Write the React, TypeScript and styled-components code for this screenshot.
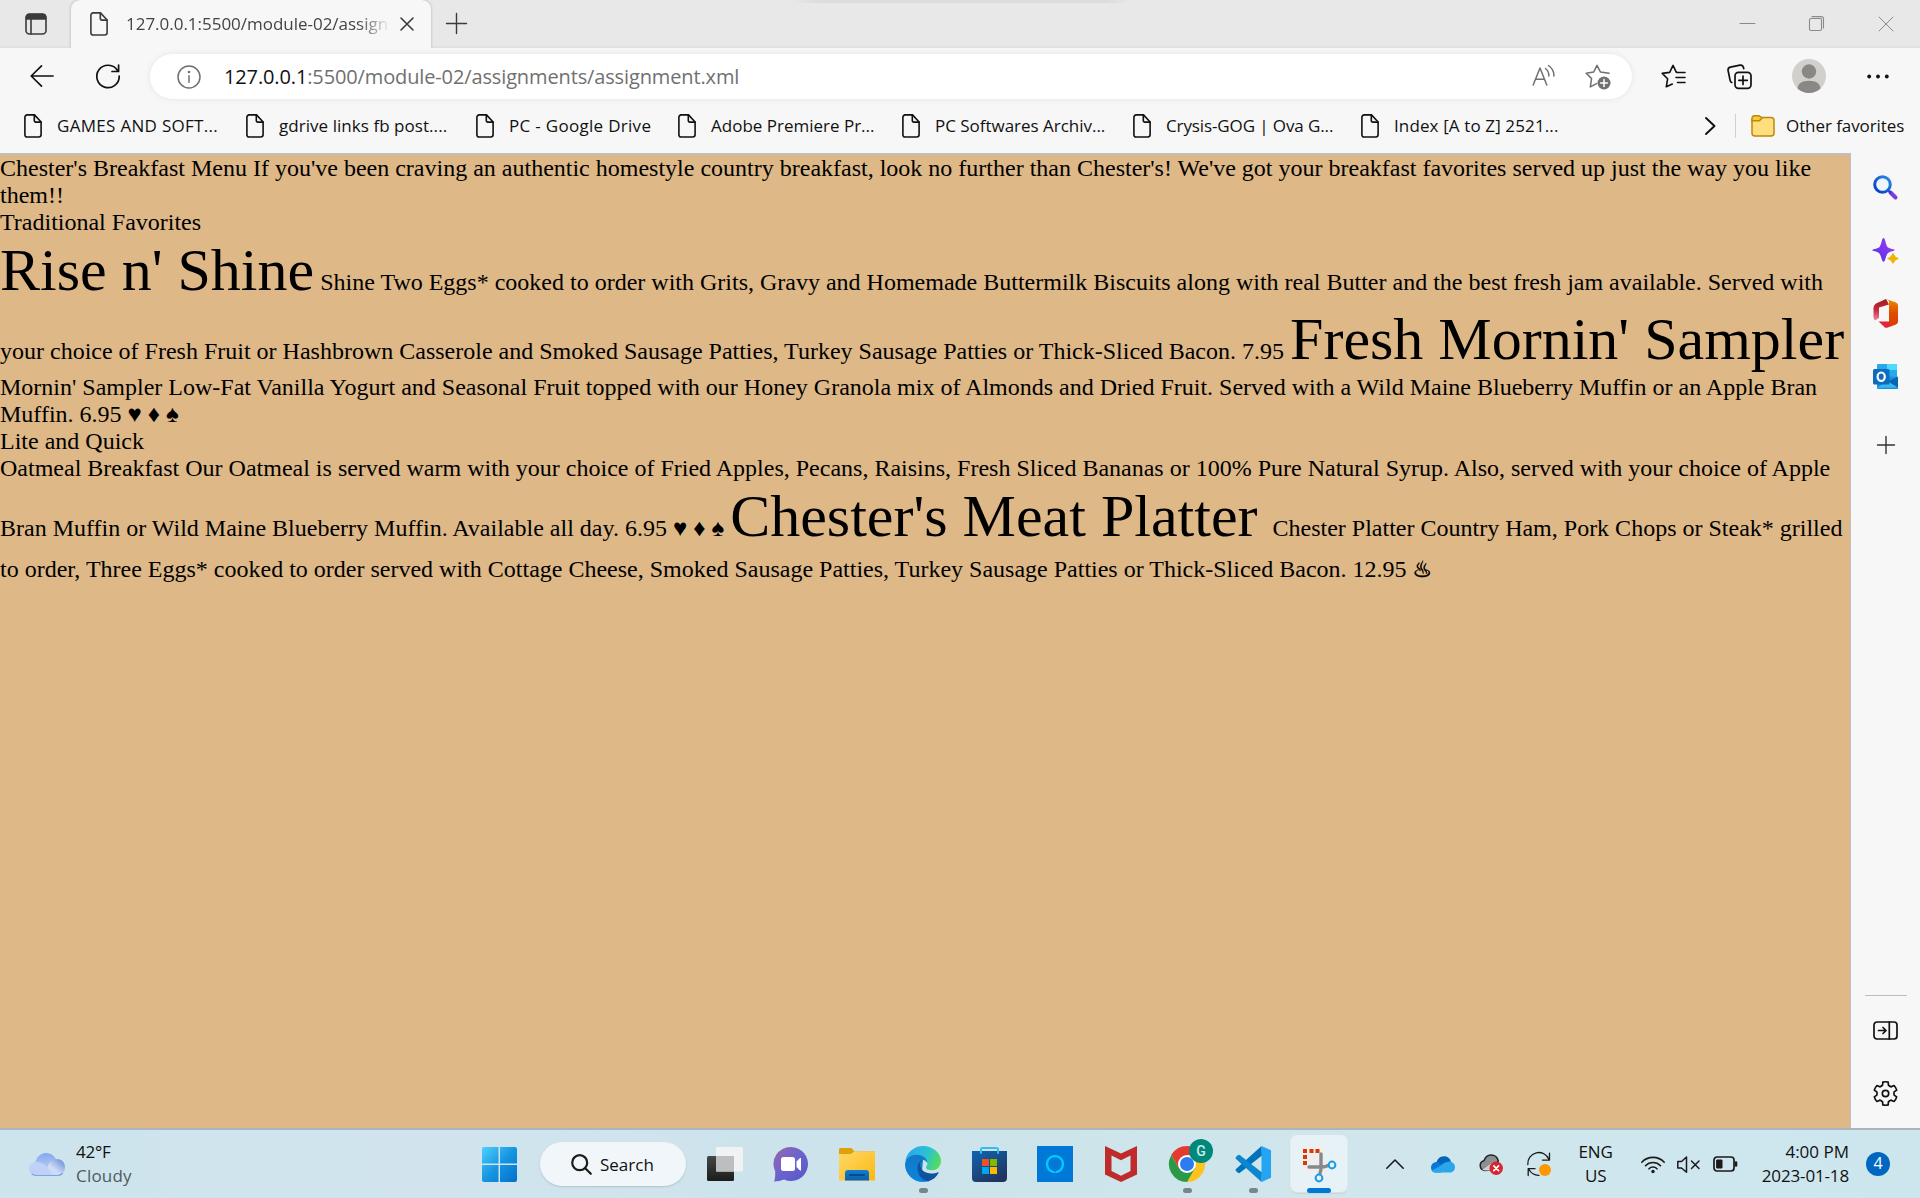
import React from "react";
import styled, { createGlobalStyle, css } from "styled-components";

const ui = `"Open Sans", "Noto Sans", "Liberation Sans", sans-serif`;

const Global = createGlobalStyle`
  * { box-sizing: border-box; }
  body { margin: 0; background: #f7f7f7; }
  svg { display: block; flex: none; overflow: visible; }
`;

const Screen = styled.div`
  display: flex;
  flex-direction: column;
  width: 1920px;
  height: 1198px;
  overflow: hidden;
  font-family: ${ui};
  color: #111;
`;

const Label = styled.span<{ $size?: number; $ls?: number; $color?: string }>`
  font-size: ${(p) => p.$size ?? 17}px;
  letter-spacing: ${(p) => p.$ls ?? 0}px;
  color: ${(p) => p.$color ?? "#111"};
  white-space: nowrap;
`;

/* ---------- tab strip ---------- */
const TabStrip = styled.header`
  display: flex;
  height: 48px;
  background: linear-gradient(#e8e8e8 45px, #dedede 48px);
  align-items: center;
`;
const TabActions = styled.div`
  width: 71px;
  padding-left: 25px;
`;
const Tab = styled.div`
  display: flex;
  align-items: center;
  width: 360px;
  height: 48px;
  padding-left: 19px;
  background: #f7f7f7;
  border-radius: 9px 9px 0 0;
  box-shadow: 0 0 3px rgba(0, 0, 0, 0.25);
  clip-path: inset(0 -4px 0 -4px);
`;
const TabTitle = styled.div`
  width: 262px;
  margin-left: 18px;
  padding-bottom: 1px;
  white-space: nowrap;
  mask-image: linear-gradient(90deg, #000 232px, transparent 264px);
`;
const CloseTab = styled.div`
  margin-left: 12px;
`;
const NewTab = styled.div`
  margin-left: 15px;
  padding-bottom: 1px;
`;
const DragHint = styled.div`
  align-self: flex-start;
  width: 340px;
  height: 3px;
  margin-left: 326px;
  background: linear-gradient(90deg, transparent, #dcdcdc 8%, #dcdcdc 92%, transparent);
`;
const WindowButtons = styled.div`
  display: flex;
  align-items: center;
  gap: 54px;
  margin-left: auto;
  padding: 0 26px 1px 0;
`;

/* ---------- toolbar ---------- */
const Toolbar = styled.div`
  display: flex;
  align-items: center;
  height: 57px;
  padding-left: 30px;
  background: #f7f7f7;
`;
const NavButtons = styled.div`
  display: flex;
  gap: 42px;
  width: 120px;
  padding-bottom: 1px;
`;
const AddressBar = styled.div`
  display: flex;
  align-items: center;
  width: 1482px;
  height: 45px;
  padding: 0 21px 0 27px;
  background: #fff;
  border-radius: 23px;
  box-shadow: 0 0 6px rgba(0, 0, 0, 0.08);
`;
const Url = styled.div`
  flex: 1;
  margin-left: 23px;
  padding-bottom: 1px;
  white-space: nowrap;
`;
const AddressIcons = styled.div`
  display: flex;
  gap: 29px;
`;
const ToolbarIcons = styled.div`
  display: flex;
  align-items: center;
  gap: 40.5px;
  margin-left: 29px;
  padding-bottom: 1px;
`;

/* ---------- bookmarks ---------- */
const Bookmarks = styled.nav`
  display: flex;
  align-items: center;
  height: 48px;
  padding-left: 24px;
  padding-bottom: 6px;
  background: #f7f7f7;
`;
const Bookmark = styled.div<{ $w: number }>`
  display: flex;
  align-items: center;
  gap: 15px;
  width: ${(p) => p.$w}px;
  & > span { padding-bottom: 2px; }
`;
const MoreBookmarks = styled.div`
  display: flex;
  align-items: center;
  height: 24px;
  margin-left: auto;
  padding-right: 19px;
  border-right: 1px solid #d0d0d0;
`;
const OtherFavorites = styled.div`
  display: flex;
  align-items: center;
  gap: 11px;
  width: 184px;
  padding-left: 15px;
  & > span { padding-bottom: 2px; }
`;

/* ---------- page ---------- */
const Body = styled.div`
  display: flex;
  height: 975px;
`;
const Page = styled.main`
  width: 1851px;
  border-top: 2px solid #bfbfbf;
  border-right: 1px solid #bfbfbf;
  background: #deb887;
  color: #000;
  font-family: "Liberation Serif", "Times New Roman", serif;
  font-size: 24px;
  line-height: 27px;
`;
const Section = styled.div``;
const ItemName = styled.span`
  font-size: 60px;
  line-height: 69px;
`;
const Steam = styled.span`
  display: inline-block;
  font-family: "DejaVu Sans", sans-serif;
  font-size: 22px;
  line-height: 38px;
  -webkit-text-stroke: 0.7px #000;
`;

/* ---------- sidebar ---------- */
const Sidebar = styled.aside`
  display: flex;
  flex-direction: column;
  align-items: center;
  width: 69px;
  padding: 19px 0 3px;
  background: #f7f7f7;
`;
const SideSlot = styled.div<{ $h?: number }>`
  display: flex;
  align-items: center;
  justify-content: center;
  height: ${(p) => p.$h ?? 63}px;
`;
const SideRule = styled.div`
  width: 42px;
  height: 1px;
  margin-top: auto;
  margin-bottom: 3px;
  background: #bdbdbd;
`;

/* ---------- taskbar ---------- */
const Taskbar = styled.footer`
  display: flex;
  align-items: center;
  height: 70px;
  border-top: 2px solid #a9b6bd;
  background: linear-gradient(90deg, #cde4ec, #d1e4ed 22%, #cce3eb 45%, #d0e6ec 70%, #cde6ee);
`;
const Weather = styled.div`
  display: flex;
  align-items: center;
  gap: 11px;
  width: 466px;
  padding-left: 29px;
`;
const Stack = styled.div<{ $align?: string }>`
  display: flex;
  flex-direction: column;
  align-items: ${(p) => p.$align ?? "flex-start"};
  line-height: 24px;
  padding-bottom: 1px;
`;
const Slot = styled.div<{ $running?: boolean }>`
  position: relative;
  display: flex;
  align-items: center;
  justify-content: center;
  width: 66px;
  height: 68px;
  ${(p) =>
    p.$running &&
    css`
      &::after {
        content: "";
        position: absolute;
        left: 28.5px;
        top: 58px;
        width: 9px;
        height: 5px;
        border-radius: 3px;
        background: #76868b;
      }
    `}
`;
const ActiveTile = styled.div`
  position: relative;
  display: flex;
  align-items: center;
  justify-content: center;
  width: 56px;
  height: 56px;
  border-radius: 6px;
  background: #e7f2f7;
  box-shadow: 0 0 0 1px rgba(255, 255, 255, 0.5), 0 1px 2px rgba(0, 0, 0, 0.2);
  &::after {
    content: "";
    position: absolute;
    left: 16px;
    bottom: -1px;
    width: 24px;
    height: 5px;
    border-radius: 3px;
    background: #0078d4;
  }
`;
const SearchPill = styled.div`
  display: flex;
  align-items: center;
  width: 146px;
  height: 44px;
  margin: 0 6px 0 8px;
  padding-left: 31px;
  gap: 8px;
  border-radius: 22px;
  background: #f0f6f9;
  box-shadow: 0 1px 2px rgba(0, 0, 0, 0.15);
`;
const AccountBadge = styled.div`
  position: absolute;
  left: 35px;
  top: 9px;
  width: 24px;
  height: 24px;
  border-radius: 50%;
  background: #00897b;
  color: #cfeae6;
  font: 500 14px/24px Roboto, sans-serif;
  text-align: center;
`;
const Tray = styled.div`
  display: flex;
  align-items: center;
  margin-left: 34px;
`;
const TrayItem = styled.div<{ $w: number }>`
  display: flex;
  align-items: center;
  width: ${(p) => p.$w}px;
`;
const Clock = styled.div`
  width: 112px;
`;
const Count = styled.div`
  width: 24px;
  height: 24px;
  margin-left: 17px;
  border-radius: 50%;
  background: #0067c0;
  color: #fff;
  font-size: 16px;
  line-height: 23px;
  text-align: center;
`;

/* ---------- icons ---------- */
type IconProps = { w: number; h: number; s?: string; sw?: number; children: React.ReactNode };
const Icon = ({ w, h, s = "none", sw = 1.6, children }: IconProps) => (
  <svg width={w} height={h} viewBox={`0 0 ${w} ${h}`} fill="none" stroke={s} strokeWidth={sw} strokeLinecap="round" strokeLinejoin="round">
    {children}
  </svg>
);

const PageIcon = ({ color = "#111" }: { color?: string }) => (
  <Icon w={18} h={24} s={color} sw={1.6}>
    <path d="M3.2.9h7.3L17.1 8v12.6a2.4 2.4 0 0 1-2.4 2.4H3.2A2.3 2.3 0 0 1 .9 20.7V3.2A2.3 2.3 0 0 1 3.2.9z" />
    <path d="M10.300 1v5.600a1.500 1.500 0 0 0 1.500 1.500H17" />
  </Icon>
);
const TabActionsIcon = () => (
  <Icon w={22} h={22} s="#3b3b3b" sw={1.6}>
    <rect x="1" y="1" width="20" height="20" rx="3.500" />
    <path d="M1.500 6V4A2.500 2.500 0 0 1 4 1.500h14A2.500 2.500 0 0 1 20.500 4v2z" fill="#3b3b3b" />
    <path d="M6 6v15" />
  </Icon>
);
const Cross = ({ size, color, sw }: { size: number; color: string; sw: number }) => (
  <Icon w={size} h={size} s={color} sw={sw}>
    <path d={`M1 1L${size - 1} ${size - 1}M${size - 1} 1L1 ${size - 1}`} />
  </Icon>
);
const Plus = ({ size, color = "#3b3b3b" }: { size: number; color?: string }) => (
  <Icon w={size} h={size} s={color} sw={1.4}>
    <path d={`M${size / 2} .5V${size - 0.5}M.5 ${size / 2}H${size - 0.5}`} />
  </Icon>
);
const BackIcon = () => (
  <Icon w={24} h={24} s="#111" sw={1.7}>
    <path d="M23 12H1.500M11.500 1.800L1.200 12l10.300 10.200" />
  </Icon>
);
const RefreshIcon = () => (
  <Icon w={24} h={24} s="#111" sw={1.7}>
    <path d="M21.500 6.500A11.200 11.200 0 1 0 23.200 12M22.600 1v6.500H16" />
  </Icon>
);
const InfoIcon = () => (
  <Icon w={24} h={24} s="#707070" sw={1.5}>
    <circle cx="12" cy="12" r="11" />
    <path d="M12 10.800v6.500" />
    <circle cx="12" cy="7" r=".6" fill="#707070" />
  </Icon>
);
const ReadAloudIcon = () => (
  <Icon w={24} h={24} s="#707070" sw={1.5}>
    <path d="M1.200 21L8 4l6.800 17M3.700 15.200h8.600M13.500 4.500q3.700 3 3.300 7.500M16.500 1.500q5.700 4 5.400 10.500" />
  </Icon>
);
const StarPlusIcon = () => (
  <Icon w={26} h={26} s="#707070" sw={1.5}>
    <path d="M24 9.300l-8.500-1.200L12 1.300 8.600 8.100 1.200 9.300l5.400 5.300-1.300 8.300 6.300-3.300" />
    <circle cx="19" cy="19" r="6.500" fill="#707070" stroke="none" />
    <path d="M19 15.600v6.800M15.600 19h6.800" stroke="#fff" />
  </Icon>
);
const FavoritesIcon = () => (
  <Icon w={25} h={24} s="#111" sw={1.6}>
    <path d="M16 8.400h-.6L12 1.400 8.700 8.400 1.200 9.400l5.400 5.400-1.300 8L11.300 20M16.500 8.500h7.500M15 13.500h9M16.500 18.500h7.500" />
  </Icon>
);
const CollectionsIcon = () => (
  <Icon w={25} h={25} s="#111" sw={1.700}>
    <rect x="8" y="8.300" width="16" height="16" rx="3.500" />
    <path d="M16 12v8.500M11.800 16.300h8.500M4.800 18.500a3 3 0 0 1-1.700-2.200L1.100 6.500a3 3 0 0 1 2.300-3.400L13 1.100a3 3 0 0 1 3.400 2.200l.3 1.300" />
  </Icon>
);
const AvatarIcon = () => (
  <Icon w={34} h={34}>
    <circle cx="17" cy="17" r="17" fill="#d2d0cd" />
    <circle cx="17" cy="12.500" r="7.200" fill="#8b8785" />
    <path d="M5.500 29.500C6 24.500 10 21.800 17 21.800s11 2.700 11.500 7.700A17 17 0 0 1 5.500 29.500z" fill="#8b8785" />
  </Icon>
);
const DotsIcon = () => (
  <Icon w={22} h={5}>
    {[2.2, 11, 19.8].map((x) => (
      <circle key={x} cx={x} cy="2.500" r="1.900" fill="#111" />
    ))}
  </Icon>
);
const FolderIcon = () => (
  <Icon w={24} h={22} s="#b98b0a" sw={1.5}>
    <path d="M1 4.500V18a3 3 0 0 0 3 3h16a3 3 0 0 0 3-3V5.500a3 3 0 0 0-3-3h-9z" fill="#ffdf7d" />
    <path d="M1 5V3a2.200 2.200 0 0 1 2.200-2.200h5L11 3 8.500 5.800H1z" fill="#fcc934" />
  </Icon>
);

/* sidebar icons */
const SideSearch = () => (
  <Icon w={25} h={25}>
    <defs>
      <linearGradient id="ss" x1="0" y1="1" x2="1" y2="0">
        <stop offset="0" stopColor="#0a35c4" />
        <stop offset="1" stopColor="#2b8fe0" />
      </linearGradient>
    </defs>
    <path d="M17.500 17.500l5 5" stroke="#7b3fe0" strokeWidth="4" />
    <path d="M14.500 14.500l3 3" stroke="#2a44c8" strokeWidth="2.400" />
    <circle cx="9.500" cy="9.500" r="7.800" stroke="url(#ss)" strokeWidth="3" fill="#eef6fc" />
  </Icon>
);
const SideSparkle = () => (
  <Icon w={27} h={26}>
    <defs>
      <linearGradient id="sp" x1="0" y1="1" x2="1" y2="0">
        <stop offset="0" stopColor="#4a2fe8" />
        <stop offset="1" stopColor="#a93df5" />
      </linearGradient>
    </defs>
    <path d="M11.500 0q1 0 1.500 2 1.500 6.500 3 7.500t6 2q1.500.5 0 1.200-4.500 1-6 2.300t-3 7q-.5 1.800-1.500 1.800t-1.500-1.800q-1.500-5.700-3-7t-6-2.300q-1.500-.7 0-1.200 4.500-1 6-2t3-7.500q.5-2 1.500-2z" fill="url(#sp)" />
    <path d="M21 15.500q1.300 4 5 5-3.700 1-5 4.500-1.300-3.500-5-4.500 3.700-1 5-5z" fill="#f0b400" stroke="#f0b400" strokeWidth="1.200" />
  </Icon>
);
const SideOffice = () => (
  <Icon w={25} h={29}>
    <defs>
      <linearGradient id="of" x1="0" y1="0" x2="0" y2="1">
        <stop offset="0" stopColor="#f08a00" />
        <stop offset=".5" stopColor="#e04a00" />
        <stop offset="1" stopColor="#d83b01" />
      </linearGradient>
      <linearGradient id="ol" x1="0" y1="0" x2="0" y2="1">
        <stop offset="0" stopColor="#a01a1a" />
        <stop offset=".5" stopColor="#c62a3c" />
        <stop offset="1" stopColor="#e88bab" />
      </linearGradient>
    </defs>
    <path d="M13 0L3 4.500Q.5 6 .5 9v9q0 2.500 1.500 3.500l4-2.500V8.500L16 5.500z" fill="url(#ol)" />
    <path d="M13 0l10 3.500q2 1 2 3v16q0 2-2 3L13.500 29l2.500-3V2z" fill="url(#of)" />
    <path d="M5.500 22.500h11V26q-1.500 3-4 3z" fill="#e4233d" />
  </Icon>
);
const SideOutlook = () => (
  <Icon w={25} h={25}>
    <path d="M5 0h18q1 0 1 1v13H4V1q0-1 1-1z" fill="#28a8ea" />
    <path d="M14 0h9q1 0 1 1v5H14z" fill="#50d9ff" />
    <path d="M4 12l21 1v11q0 1-1 1H5q-1 0-1-1z" fill="#1490df" />
    <path d="M25 12.500v12L14 18z" fill="#0a64b0" />
    <path d="M4 24l21-.5L14 17z" fill="#35b8f1" />
    <rect y="5" width="16.500" height="15.500" rx="1.500" fill="#0f6cbd" />
    <ellipse cx="8.200" cy="12.700" rx="3.600" ry="4.200" stroke="#fff" strokeWidth="2.200" />
  </Icon>
);
const SidePanel = () => (
  <Icon w={25} h={19} s="#111" sw={1.700}>
    <rect x="1" y="1" width="23" height="17" rx="3" />
    <path d="M16.300 1v17M5.500 9.500h7.500M10 6.500l3 3-3 3" />
  </Icon>
);
const gearPath = (() => {
  const pts: string[] = [];
  for (let i = 0; i < 6; i++) {
    const a = (i * Math.PI) / 3 - Math.PI / 2;
    const at = (r: number, d: number) =>
      `${(12.5 + r * Math.cos(a + d)).toFixed(2)} ${(12.5 + r * Math.sin(a + d)).toFixed(2)}`;
    pts.push(`${i ? "L" : "M"}${at(8.8, -0.34)}L${at(11.7, -0.23)}Q${at(12.1, 0)} ${at(11.7, 0.23)}L${at(8.8, 0.34)}Q${at(8.2, 0.52)} ${at(8.8, 0.71)}`);
  }
  return pts.join("") + "Z";
})();
const GearIcon = () => (
  <Icon w={25} h={25} s="#111" sw={1.7}>
    <path d={gearPath} />
    <circle cx="12.500" cy="12.500" r="3.200" />
  </Icon>
);

/* taskbar icons */
const CloudIcon = () => (
  <Icon w={36} h={23}>
    <defs>
      <linearGradient id="cl" x1="0" y1="0" x2="0" y2="1">
        <stop offset="0" stopColor="#84a7ee" />
        <stop offset="1" stopColor="#c3d5f6" />
      </linearGradient>
      <linearGradient id="cr" x1="1" y1="0" x2="0" y2="1">
        <stop offset="0" stopColor="#5f86d6" />
        <stop offset=".6" stopColor="#cfdcf6" />
      </linearGradient>
    </defs>
    <path d="M6 13C6 5 11 0 17 0c6 0 10 4 10.500 9L22 20H8z" fill="url(#cl)" />
    <path d="M17 22.500c0-3 0-6 3-12C22 7 25 6 28 6c5 0 8 4 8 8.300 0 4.700-3.500 8.200-8 8.200z" fill="url(#cr)" />
    <path d="M8 22.500c-5 0-8-3-8-6.800C0 12 3 9 7.500 9c4 0 6.500 1.500 9.500 4l8 9.500z" fill="#bfd2f5" />
    <path d="M3 21q2 1.500 5 1.500h20q3.500 0 5.500-2" stroke="#7fa2ea" strokeWidth="1.200" />
  </Icon>
);
const StartIcon = () => (
  <Icon w={35} h={35}>
    <defs>
      <linearGradient id="st" gradientUnits="userSpaceOnUse" x1="0" y1="0" x2="35" y2="35">
        <stop offset="0" stopColor="#4dd0ff" />
        <stop offset=".5" stopColor="#1796e0" />
        <stop offset="1" stopColor="#0070cc" />
      </linearGradient>
    </defs>
    <path d="M2 0h14.500v16.500H0V2Q0 0 2 0zM18 0h15q2 0 2 2v14.500H18zM0 18h16.500v17H2q-2 0-2-2zM18 18h17v15q0 2-2 2H18z" fill="url(#st)" />
  </Icon>
);
const SearchIcon = () => (
  <Icon w={21} h={21} s="#1b1b1b" sw={2.200}>
    <circle cx="8.700" cy="8.700" r="7.500" />
    <path d="M14.200 14.200l5.600 5.600" />
  </Icon>
);
const TaskViewIcon = () => (
  <Icon w={36} h={34}>
    <defs>
      <linearGradient id="tv" x1="0" y1="0" x2="0" y2="1">
        <stop offset="0" stopColor="#464646" />
        <stop offset="1" stopColor="#1c1c1c" />
      </linearGradient>
    </defs>
    <rect y="9" width="27" height="25" rx="1.500" fill="url(#tv)" />
    <rect x="9" width="27" height="24.500" rx="1.500" fill="#f0f2f3" />
    <path d="M9 9h18v15.500H9z" fill="#bdbebf" />
  </Icon>
);
const ChatIcon = () => (
  <Icon w={35} h={35}>
    <defs>
      <linearGradient id="ch" x1="0" y1="0" x2="1" y2="1">
        <stop offset="0" stopColor="#9b66a8" />
        <stop offset=".5" stopColor="#6a63cd" />
        <stop offset="1" stopColor="#5558c8" />
      </linearGradient>
    </defs>
    <path d="M17 0a17 17 0 1 1-7 32.500Q5.500 34.500 0 34.500 1.500 31 1.200 24.500A17 17 0 0 1 17 0z" fill="url(#ch)" />
    <rect x="7" y="10" width="14" height="14" rx="2.500" fill="#fff" />
    <path d="M22.500 14.500L26 11h1v12.500h-1L22.500 20z" fill="#fff" />
  </Icon>
);
const ExplorerIcon = () => (
  <Icon w={36} h={33}>
    <defs>
      <linearGradient id="ex" x1="0" y1="0" x2="1" y2="1">
        <stop offset="0" stopColor="#ffd968" />
        <stop offset="1" stopColor="#fcb813" />
      </linearGradient>
      <linearGradient id="eb" x1="0" y1="0" x2="0" y2="1">
        <stop offset="0" stopColor="#0a7fd8" />
        <stop offset="1" stopColor="#0f5fa8" />
      </linearGradient>
    </defs>
    <path d="M0 1.500Q0 0 1.500 0H12q1 0 3.500 3.500H36V12H0z" fill="#dfa00a" />
    <path d="M0 6h11q1.500 0 4-2.500h21V32q0 .5-.5.5H1Q0 32.500 0 31.500z" fill="url(#ex)" />
    <path d="M6 32.500V25q0-3 3-3h18q3 0 3 3v7.500z" fill="url(#eb)" />
    <path d="M11 27h14" stroke="#0b4a86" strokeWidth="1.800" />
  </Icon>
);
const EdgeIcon = () => (
  <Icon w={36} h={36}>
    <defs>
      <linearGradient id="e1" gradientUnits="userSpaceOnUse" x1="2" y1="4" x2="36" y2="18">
        <stop offset="0" stopColor="#2ba6f0" />
        <stop offset=".55" stopColor="#2bc3d2" />
        <stop offset="1" stopColor="#5be04a" />
      </linearGradient>
      <linearGradient id="e2" x1="0" y1="0" x2="0" y2="1">
        <stop offset="0" stopColor="#1578c4" />
        <stop offset="1" stopColor="#0a84e0" />
      </linearGradient>
    </defs>
    <path d="M.3 15A18 18 0 0 1 18 0c10 0 18 7 18 15 0 6-4.500 9.300-9.500 9.300-3.500 0-5.500-1.300-5.500-2.800 0-1 1.500-2 1.500-4.500L12 9z" fill="url(#e1)" />
    <path d="M0 18C1 12 6 8.800 11.500 8.800c6 0 10.500 3 11 8.200-1-2-2.500-3.200-4.500-3.200l-1 12 6.500 9.300Q20.500 36 18 36A18 18 0 0 1 0 18z" fill="url(#e2)" />
    <path d="M18 13.800c-3 1-5.500 4-5.500 8 0 7 4.500 12.700 10.500 13.700 5-1.500 8.500-4.500 10.500-8.500q.3-1.200-.8-.8c-2 1-4 1.400-6.200 1.400-6.500 0-11.500-4-11.500-9 0-2 1-3.800 3-4.800z" fill="#0f539f" />
  </Icon>
);
const StoreIcon = () => (
  <Icon w={35} h={35}>
    <defs>
      <linearGradient id="sr" x1="0" y1="0" x2=".6" y2="1">
        <stop offset="0" stopColor="#0f66b2" />
        <stop offset="1" stopColor="#21355f" />
      </linearGradient>
    </defs>
    <path d="M0 4h35v27q0 4-4 4H4q-4 0-4-4z" fill="url(#sr)" />
    <path d="M9 6V2.500Q9 1 10.500 1h14Q26 1 26 2.500V6" stroke="#32bdf2" strokeWidth="2" />
    <path d="M10 12h7v7h-7z" fill="#f25022" />
    <path d="M18 12h7v7h-7z" fill="#7fba00" />
    <path d="M10 20h7v7h-7z" fill="#00a4ef" />
    <path d="M18 20h7v7h-7z" fill="#ffb900" />
  </Icon>
);
const AlexaIcon = () => (
  <Icon w={36} h={36}>
    <path d="M0 0h36v36H0z" fill="#0078d7" />
    <path d="M16.500 26A8 8 0 1 1 19.500 26" stroke="#00caff" strokeWidth="2.200" />
    <path d="M16.800 26.500h2.400" stroke="#00caff" strokeWidth="1" />
  </Icon>
);
const McAfeeIcon = () => (
  <Icon w={32} h={36}>
    <path d="M0 0l16 7.500L32 0v28.500L16 36 0 28.500z" fill="#bf2b2b" />
    <path d="M6.500 9.500l9.500 4.700 9.500-4.700V25L16 29.800 6.500 25z" fill="#cfe5ec" />
  </Icon>
);
const ChromeIcon = () => (
  <Icon w={36} h={36}>
    <path d="M18 18L2.400 9A18 18 0 0 1 33.600 9z" fill="#e33b2e" />
    <path d="M18 18V9h15.600A18 18 0 0 1 18 36z" fill="#fcc31e" />
    <path d="M18 18l7.800 4.500L18 36A18 18 0 0 1 2.400 9l7.800 13.500z" fill="#2a9a48" />
    <path d="M10.200 22.500L2.400 9Q4 6 6.500 4.200L18 9z" fill="#e33b2e" />
    <circle cx="18" cy="18" r="9" fill="#fff" />
    <circle cx="18" cy="18" r="7" fill="#2d7bf0" />
  </Icon>
);
const CodeIcon = () => (
  <Icon w={36} h={36}>
    <path d="M26.500 0L1 23q-1 1 0 2l2 1.800q1 .7 2 0L27 9.500z" fill="#0073bd" />
    <path d="M26.500 36L1 13q-1-1 0-2l2-1.800q1-.7 2 0L27 26.500z" fill="#0c86cf" />
    <path d="M26.500 0L36 4.200v27.600L26.500 36z" fill="#25a4f2" />
  </Icon>
);
const SnipIcon = () => (
  <Icon w={36} h={36}>
    <rect x="0" y="0" width="24" height="27" rx="2" fill="#efeeee" />
    <path d="M2 3h4v4H2zM8.500 3h4v4h-4zM14.500 3h4v4h-4zM2 9h4v4H2zM2 15h4v4H2z" fill="#d63b04" />
    <path d="M20 8v14q0 3-1 5M8 21h13q3 0 6-1.500" stroke="#85898c" strokeWidth="3.400" />
    <circle cx="31" cy="19" r="3.400" stroke="#1a9be6" strokeWidth="2" />
    <circle cx="18" cy="32" r="3.400" stroke="#1a9be6" strokeWidth="2" />
  </Icon>
);
const ChevronUp = () => (
  <Icon w={18} h={10} s="#1b1b1b" sw={1.6}>
    <path d="M.8 9.200L9 1l8.200 8.200" />
  </Icon>
);
const OneDriveIcon = () => (
  <Icon w={24} h={17}>
    <path d="M5 8C6 3 9 .3 13 .3c3.500 0 6 2 7 5.200L12 11z" fill="#0364b8" />
    <path d="M5 16.500C2 16.500 0 14.500 0 11.500 0 8 3 5.500 6.500 6L18 12l-8 4.500z" fill="#0a78d4" />
    <path d="M10 9.500Q13 6 18 5.500c3.500 0 6 2.500 6 5.500s-2 5.500-5 5.500H4q-2 0-3.300-2z" fill="#28a8ea" />
  </Icon>
);
const OfflineCloudIcon = () => (
  <Icon w={24} h={21}>
    <path d="M5.500 16.500A5 5 0 0 1 5 6.700C6.300 3 9 1 12 1c4 0 6.500 2.500 7.300 6L13 16z" fill="#8d9093" stroke="#222" strokeWidth="1.500" />
    <path d="M3 16l10-7 6-1-5 8.500H6z" fill="#cdd0d2" />
    <circle cx="17.200" cy="14.300" r="6.700" fill="#d9252f" />
    <path d="M14.800 11.900l4.800 4.800M19.600 11.900l-4.800 4.800" stroke="#fff" strokeWidth="1.700" />
  </Icon>
);
const SyncIcon = () => (
  <Icon w={24} h={24} s="#1b1b1b" sw={1.300}>
    <path d="M.8 12.500A11 11 0 0 1 22 7.500M22.500 1.200v6.900H15.500M12 23.300A11 11 0 0 1 2 17.500M1.200 23.500v-6.800H8" />
    <circle cx="18" cy="18" r="6" fill="#ff9800" stroke="none" />
  </Icon>
);
const WifiIcon = () => (
  <Icon w={24} h={17} s="#1b1b1b" sw={1.600}>
    <path d="M.8 6.200a15.500 15.500 0 0 1 22.400 0M4.500 9.700a10.500 10.500 0 0 1 15 0M8 12.800a5.500 5.500 0 0 1 8 0" />
    <circle cx="12" cy="15.500" r="1.700" fill="#1b1b1b" stroke="none" />
  </Icon>
);
const MuteIcon = () => (
  <Icon w={23} h={17} s="#1b1b1b" sw={1.500}>
    <path d="M.8 5.500h3.700L9.500 1v15.200L4.500 12H.8zM14.500 5l7.500 7.500M22 5l-7.500 7.500" />
  </Icon>
);
const BatteryIcon = () => (
  <Icon w={25} h={16} s="#1b1b1b" sw={1.700}>
    <rect x="1" y="1" width="20" height="14" rx="3" />
    <path d="M4 4h5v8H4z" fill="#1b1b1b" strokeWidth="1" />
    <path d="M23 6.500v3" strokeWidth="2.600" />
  </Icon>
);

/* name, slot width, letter spacing */
const bookmarks: [string, number, number][] = [
  ["GAMES AND SOFT...", 222, 0.3],
  ["gdrive links fb post....", 230, 0.05],
  ["PC - Google Drive", 202, 0.3],
  ["Adobe Premiere Pr...", 224, 0],
  ["PC Softwares Archiv...", 231, -0.02],
  ["Crysis-GOG | Ova G...", 228, -0.11],
  ["Index [A to Z] 2521...", 220, 0.12],
];

export default function App() {
  return (
    <Screen>
      <Global />
      <TabStrip>
        <TabActions><TabActionsIcon /></TabActions>
        <Tab>
          <PageIcon color="#3b3b3b" />
          <TabTitle><Label $color="#444" $ls={-0.02}>127.0.0.1:5500/module-02/assign</Label></TabTitle>
          <CloseTab><Cross size={14} color="#3b3b3b" sw={1.6} /></CloseTab>
        </Tab>
        <NewTab><Plus size={21} /></NewTab>
        <DragHint />
        <WindowButtons>
          <Icon w={15} h={15} s="#8a8a8a" sw={1}><path d="M0 7.500h15" /></Icon>
          <Icon w={15} h={15} s="#8a8a8a" sw={1.100}>
            <rect x=".5" y="2.500" width="12" height="12" rx="1.500" />
            <path d="M3 .6h9a2.500 2.500 0 0 1 2.500 2.500v9" />
          </Icon>
          <Cross size={16} color="#8a8a8a" sw={1} />
        </WindowButtons>
      </TabStrip>
      <Toolbar>
        <NavButtons><BackIcon /><RefreshIcon /></NavButtons>
        <AddressBar>
          <InfoIcon />
          <Url>
            <Label $size={20} $ls={-0.13}>127.0.0.1</Label>
            <Label $size={20} $ls={-0.13} $color="#707070">:5500/module-02/assignments/assignment.xml</Label>
          </Url>
          <AddressIcons><ReadAloudIcon /><StarPlusIcon /></AddressIcons>
        </AddressBar>
        <ToolbarIcons>
          <FavoritesIcon /><CollectionsIcon /><AvatarIcon /><DotsIcon />
        </ToolbarIcons>
      </Toolbar>
      <Bookmarks>
        {bookmarks.map(([name, w, ls]) => (
          <Bookmark key={name} $w={w}><PageIcon /><Label $ls={ls}>{name}</Label></Bookmark>
        ))}
        <MoreBookmarks>
          <Icon w={12} h={18} s="#111" sw={1.900}><path d="M2 1l8.500 8L2 17" /></Icon>
        </MoreBookmarks>
        <OtherFavorites><FolderIcon /><Label $ls={-0.08}>Other favorites</Label></OtherFavorites>
      </Bookmarks>
      <Body>
        <Page>
          <Section>
            Chester's Breakfast Menu If you've been craving an authentic homestyle country breakfast, look no further than
            Chester's! We've got your breakfast favorites served up just the way you like them!!
          </Section>
          <Section>Traditional Favorites</Section>
          <Section>
            <ItemName>Rise n' Shine</ItemName> Shine Two Eggs* cooked to order with Grits, Gravy and Homemade Buttermilk
            Biscuits along with real Butter and the best fresh jam available. Served with your choice of Fresh Fruit or
            Hashbrown Casserole and Smoked Sausage Patties, Turkey Sausage Patties or Thick-Sliced Bacon. 7.95{" "}
            <ItemName>Fresh Mornin' Sampler </ItemName>Mornin' Sampler Low-Fat Vanilla Yogurt and Seasonal Fruit topped
            with our Honey Granola mix of Almonds and Dried Fruit. Served with a Wild Maine Blueberry Muffin or an Apple
            Bran Muffin. 6.95 ♥ ♦ ♠
          </Section>
          <Section>Lite and Quick</Section>
          <Section>
            Oatmeal Breakfast Our Oatmeal is served warm with your choice of Fried Apples, Pecans, Raisins, Fresh Sliced
            Bananas or 100% Pure Natural Syrup. Also, served with your choice of Apple Bran Muffin or Wild Maine Blueberry
            Muffin. Available all day. 6.95 ♥ ♦ ♠{" "}
            <ItemName>Chester's Meat Platter </ItemName>Chester Platter Country Ham, Pork Chops or Steak* grilled to order,
            Three Eggs* cooked to order served with Cottage Cheese, Smoked Sausage Patties, Turkey Sausage Patties or
            Thick-Sliced Bacon. 12.95 <Steam>♨</Steam>
          </Section>
        </Page>
        <Sidebar>
          <SideSlot $h={30}><SideSearch /></SideSlot>
          <SideSlot $h={97}><SideSparkle /></SideSlot>
          <SideSlot $h={29}><SideOffice /></SideSlot>
          <SideSlot $h={97}><SideOutlook /></SideSlot>
          <SideSlot $h={39}><Plus size={18} color="#333" /></SideSlot>
          <SideRule />
          <SideSlot><SidePanel /></SideSlot>
          <SideSlot><GearIcon /></SideSlot>
        </Sidebar>
      </Body>
      <Taskbar>
        <Weather>
          <CloudIcon />
          <Stack><Label $ls={-0.2}>42°F</Label><Label $ls={0.2} $color="#4d5b60">Cloudy</Label></Stack>
        </Weather>
        <Slot><StartIcon /></Slot>
        <SearchPill><SearchIcon /><Label>Search</Label></SearchPill>
        <Slot><TaskViewIcon /></Slot>
        <Slot><ChatIcon /></Slot>
        <Slot><ExplorerIcon /></Slot>
        <Slot $running><EdgeIcon /></Slot>
        <Slot><StoreIcon /></Slot>
        <Slot><AlexaIcon /></Slot>
        <Slot><McAfeeIcon /></Slot>
        <Slot $running><ChromeIcon /><AccountBadge>G</AccountBadge></Slot>
        <Slot $running><CodeIcon /></Slot>
        <Slot><ActiveTile><SnipIcon /></ActiveTile></Slot>
        <Tray>
          <TrayItem $w={45}><ChevronUp /></TrayItem>
          <TrayItem $w={48}><OneDriveIcon /></TrayItem>
          <TrayItem $w={48}><OfflineCloudIcon /></TrayItem>
          <TrayItem $w={51.5}><SyncIcon /></TrayItem>
          <TrayItem $w={62.5}><Stack $align="center"><Label $ls={-0.1}>ENG</Label><Label $ls={-0.2}>US</Label></Stack></TrayItem>
          <TrayItem $w={36}><WifiIcon /></TrayItem>
          <TrayItem $w={36}><MuteIcon /></TrayItem>
          <TrayItem $w={24}><BatteryIcon /></TrayItem>
          <Clock><Stack $align="flex-end"><Label>4:00 PM</Label><Label $ls={-0.15}>2023-01-18</Label></Stack></Clock>
          <Count>4</Count>
        </Tray>
      </Taskbar>
    </Screen>
  );
}
